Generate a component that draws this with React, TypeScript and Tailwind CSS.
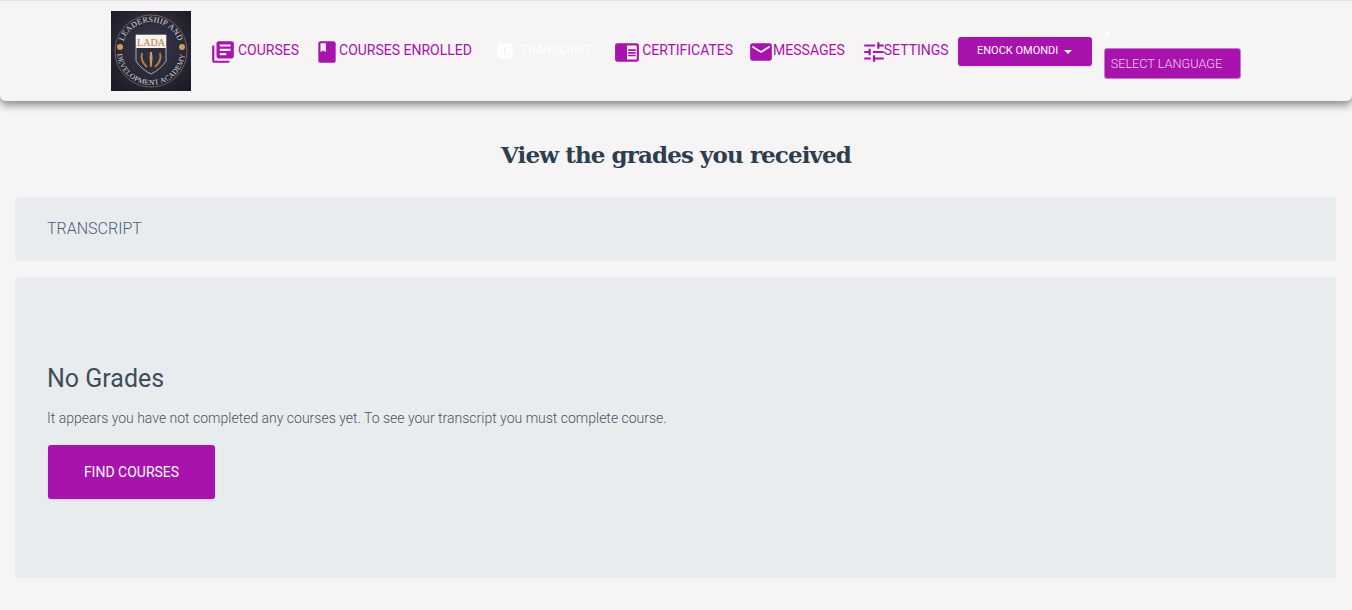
import { FC, ReactNode } from "react"
import { MdLibraryBooks, MdBook, MdAssessment, MdChromeReaderMode, MdEmail, MdTune } from "react-icons/md"

const Logo: FC = () => (
    <svg width="80" height="80" viewBox="0 0 80 80" className="shrink-0">
        <defs>
            <radialGradient id="bg" cx="50%" cy="45%" r="70%">
                <stop offset="0%" stopColor="#3a3a4d" />
                <stop offset="100%" stopColor="#1b1b26" />
            </radialGradient>
            <path id="arcTop" d="M11 40 A29 29 0 0 1 69 40" />
            <path id="arcBottom" d="M6 40 A34 34 0 0 0 74 40" />
        </defs>
        <rect width="80" height="80" fill="url(#bg)" />
        <circle cx="40" cy="40" r="36" fill="none" stroke="#9a7357" strokeWidth="0.7" />
        <circle cx="9" cy="36" r="3" fill="#d09a60" />
        <circle cx="71" cy="36" r="3" fill="#d09a60" />
        <text fontFamily="'Liberation Serif', serif" fontSize="8" fill="#d8d8de" letterSpacing="0.3">
            <textPath href="#arcTop" startOffset="50%" textAnchor="middle">LEADERSHIP AND</textPath>
        </text>
        <text fontFamily="'Liberation Serif', serif" fontSize="7.5" fill="#d8d8de" letterSpacing="0.3">
            <textPath href="#arcBottom" startOffset="50%" textAnchor="middle">DEVELOPMENT ACADEMY</textPath>
        </text>
        <path d="M25 24 H55 V50 Q50 58 40 63 Q30 58 25 50 Z" fill="#2e2e3e" stroke="#c8c8d0" strokeWidth="0.8" />
        <rect x="25" y="24" width="30" height="13" fill="#f7f2ea" />
        <text x="40" y="35" textAnchor="middle" fontFamily="'Liberation Serif', serif" fontSize="10" fill="#b4794a">LADA</text>
        <path d="M39 41 h2 l0.5 6 -0.8 9 h-1.4 l-0.8 -9 z" fill="#d09a60" />
        <path d="M31 42 Q29 50 36 56" fill="none" stroke="#b4794a" strokeWidth="2" />
        <path d="M49 42 Q51 50 44 56" fill="none" stroke="#b4794a" strokeWidth="2" />
    </svg>
)

const NavItem: FC<{ icon: ReactNode; label: string; className?: string; muted?: boolean }> = ({ icon, label, className, muted }) => (
    <a className={`flex items-center shrink-0 leading-none ${muted ? "text-white text-[12px]" : "text-[#a812ad] text-[14px]"} ${className ?? ""}`}>
        {icon}
        <span className="mb-[4px]">{label}</span>
    </a>
)

const App: FC = () => {
    return (
        <div className="min-h-[610px] bg-[#f6f4f5] font-['Roboto',sans-serif] overflow-hidden">
            <header className="h-[101px] bg-[#f6f4f5] border-t border-[#dfe3e6] rounded-b-md shadow-[0_4px_8px_rgba(0,0,0,0.45)] flex items-start pl-[111px]">
                <div className="mt-[10px]"><Logo /></div>
                <nav className="flex items-start pt-[38px]">
                    <NavItem className="ml-[19px]" label="COURSES" icon={<MdLibraryBooks className="text-[26px] mr-[2px]" />} />
                    <NavItem className="ml-[16px]" label="COURSES ENROLLED" icon={<MdBook className="text-[26px] -ml-[1px] -mr-[1px]" />} />
                    <NavItem muted className="ml-[23px] pt-[2px]" label="TRANSCRIPT" icon={<MdAssessment className="text-[20px] mr-[6px] mb-px" />} />
                    <NavItem className="ml-[23px]" label="CERTIFICATES" icon={<MdChromeReaderMode className="text-[26px] -ml-[1px] mr-[2px]" />} />
                    <NavItem className="ml-[16px]" label="MESSAGES" icon={<MdEmail className="text-[26px] -ml-[1px] -mr-[1px]" />} />
                    <NavItem className="ml-[17px]" label="SETTINGS" icon={<MdTune className="text-[26px] -ml-[1px] -mr-[3px]" />} />
                </nav>
                <button className="ml-[9px] mt-[36px] w-[134px] h-[29px] rounded-[3px] bg-[#a812ad] text-white text-[11px] flex items-center justify-center shadow-sm shrink-0">
                    ENOCK OMONDI
                    <span className="ml-[6px] border-x-[4px] border-x-transparent border-t-[4px] border-t-white" />
                </button>
                <div className="ml-[12px] mt-[31px] shrink-0">
                    <div className="size-[4px] rounded-full bg-white ml-[1px] mb-[12px]" />
                    <div className="w-[137px] h-[31px] rounded-[3px] bg-[#a812ad] border border-[#c879cc] text-[#f0d0f2] text-[12.7px] font-light flex items-center pl-[6px]">SELECT LANGUAGE</div>
                </div>
            </header>
            <h2 className="mt-[36px] text-center text-[#2c3e50] text-[23px] leading-[36px] font-bold font-['DejaVu_Serif',serif] tracking-[-0.9px]">View the grades you received</h2>
            <main className="ml-[15px] mr-[16px] mt-[24px] flex flex-col gap-[16px]">
                <div className="h-[64px] rounded bg-[#e9ecef] flex items-center pl-[32px] text-[#4a6078] font-light text-[16px]">TRANSCRIPT</div>
                <div className="h-[301px] rounded bg-[#e9ecef] pl-[32px] pt-[85px] text-[#3f4d5b]">
                    <h3 className="text-[25px] leading-[34px]">No Grades</h3>
                    <p className="mt-[12px] text-[14px] font-light leading-[20px] text-[#4a5560]">It appears you have not completed any courses yet. To see your transcript you must complete course.</p>
                    <button className="mt-[17px] ml-px w-[167px] h-[54px] rounded-[3px] bg-[#a812ad] text-white text-[14px] shadow-sm">FIND COURSES</button>
                </div>
            </main>
        </div>
    )
}

export default App
